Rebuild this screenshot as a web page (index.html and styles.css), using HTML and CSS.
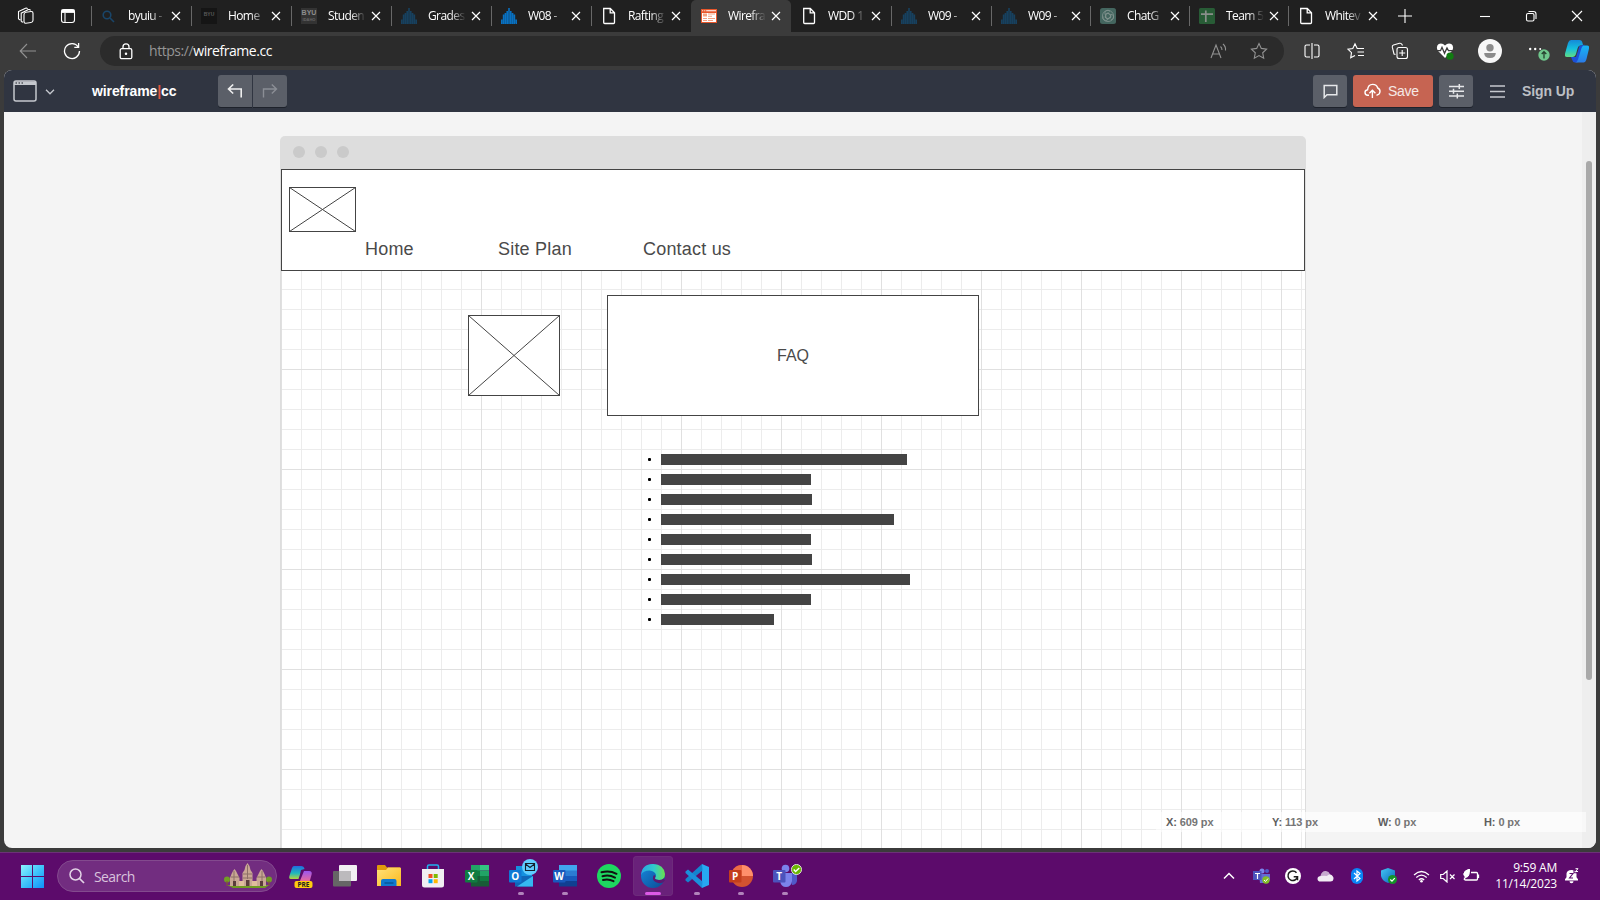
FILE: index.html
```html
<!DOCTYPE html>
<html lang="en">
<head>
<meta charset="utf-8">
<title>Wireframe.cc</title>
<link rel="stylesheet" href="styles.css">
</head>
<body>
<svg class="defs" aria-hidden="true">
  <defs>
    <linearGradient id="g-start" x1="0" y1="0" x2="1" y2="1"><stop offset="0" stop-color="#8cf3ff"/><stop offset=".5" stop-color="#3fc4fb"/><stop offset="1" stop-color="#0f90fb"/></linearGradient>
    <linearGradient id="g-cop1" x1="0" y1="0" x2="0" y2="1"><stop offset="0" stop-color="#1589d8"/><stop offset=".5" stop-color="#14bede"/><stop offset="1" stop-color="#5fdc84"/></linearGradient>
    <linearGradient id="g-cop2" x1="0" y1="0" x2="0" y2="1"><stop offset="0" stop-color="#16b5f4"/><stop offset="1" stop-color="#2b7be6"/></linearGradient>
    <linearGradient id="g-pre1" x1="0" y1="0" x2="0" y2="1"><stop offset="0" stop-color="#216ddf"/><stop offset=".55" stop-color="#1fb7bd"/><stop offset="1" stop-color="#b5d43d"/></linearGradient>
    <linearGradient id="g-pre2" x1="0" y1="0" x2="0" y2="1"><stop offset="0" stop-color="#9a56ef"/><stop offset="1" stop-color="#f16c92"/></linearGradient>
    <linearGradient id="g-fold" x1="0" y1="0" x2="1" y2="1"><stop offset="0" stop-color="#ffe27a"/><stop offset="1" stop-color="#fbb91d"/></linearGradient>
    <linearGradient id="g-edge" x1="0" y1="0" x2="1" y2="0"><stop offset="0" stop-color="#2aa5e4"/><stop offset=".55" stop-color="#31cbca"/><stop offset="1" stop-color="#6be04c"/></linearGradient>
    <linearGradient id="g-edge2" x1="0" y1="0" x2="1" y2="1"><stop offset="0" stop-color="#1789dd"/><stop offset="1" stop-color="#0b4b94"/></linearGradient>
    <linearGradient id="g-shield" x1="0" y1="0" x2="1" y2="1"><stop offset="0" stop-color="#43c7f3"/><stop offset="1" stop-color="#0c65bc"/></linearGradient>
    <symbol id="i-close" viewBox="0 0 10 10"><path d="M1 1l8 8M9 1l-8 8"/></symbol>
    <symbol id="i-page" viewBox="0 0 16 18"><path d="M2.700 1.500h6.600l4.200 4.200v9.800a1 1 0 0 1-1 1H3.700a1 1 0 0 1-1-1zM9.200 1.500v4.300h4.300"/></symbol>
    <symbol id="i-temple" viewBox="0 0 16 16"><path d="M.8 16v-4.500M2.600 16V6.500M4.400 16V5M6.200 16V3M8 16V0M9.800 16V3M11.600 16V5M13.400 16V6.500M15.200 16v-4.500"/></symbol>
  </defs>
</svg>

<div class="browser">
  <div class="tabstrip">
    <div class="strip-btns">
      <svg class="ln" width="18" height="18" viewBox="0 0 18 18"><rect x="7" y="4.500" width="9" height="11" rx="2" transform="skewY(-8) translate(0 2)"/><path d="M4.200 14.500V6.200L11.500 2.600q1.500-.5 2 .9M1.500 12V4.500L8.500 1.200q1.300-.5 2 .8M4.200 14.500l2 .8M1.500 12l1.800 1"/></svg>
      <svg class="ln" width="16" height="16" viewBox="0 0 16 16"><rect x="1.500" y="1.500" width="13" height="13" rx="2.500"/><path d="M1.500 3.200h13" stroke-width="3.400"/><path d="M5 5v9"/></svg>
    </div>
    <div class="tab"><svg class="fav search" viewBox="0 0 16 16"><circle cx="6" cy="7" r="3.800"/><path d="M9 10l4 4"/></svg><span class="t">byuiu -</span><svg class="x"><use href="#i-close"/></svg></div>
    <div class="tab"><span class="fav byu">BYU</span><span class="t">Home</span><svg class="x"><use href="#i-close"/></svg></div>
    <div class="tab"><span class="fav byu big">BYU<small>IDAHO</small></span><span class="t">Studen</span><svg class="x"><use href="#i-close"/></svg></div>
    <div class="tab"><svg class="fav temple"><use href="#i-temple"/></svg><span class="t">Grades</span><svg class="x"><use href="#i-close"/></svg></div>
    <div class="tab"><svg class="fav temple lit"><use href="#i-temple"/></svg><span class="t">W08 -</span><svg class="x"><use href="#i-close"/></svg></div>
    <div class="tab"><svg class="fav page"><use href="#i-page"/></svg><span class="t">Rafting</span><svg class="x"><use href="#i-close"/></svg></div>
    <div class="tab active"><svg class="fav" viewBox="0 0 16 16"><path fill="#e8572c" d="M0 1h16v14H0z"/><path fill="#fff" d="M1 5h14v9H1zM1.200 2.200h1v1h-1zM3.300 2.200h1v1h-1zM5.200 2.200H15v1H5.200z"/><path fill="#f4a182" d="M2 5.600h4v3H2zM7 5.600h7v1H7zM7 7.700h4v1H7zM2 10h4v1H2zM7 10h7v1H7zM2 12.100h4v1H2zM7 12.100h5v1H7z"/></svg><span class="t">Wirefra</span><svg class="x"><use href="#i-close"/></svg></div>
    <div class="tab"><svg class="fav page"><use href="#i-page"/></svg><span class="t">WDD 1</span><svg class="x"><use href="#i-close"/></svg></div>
    <div class="tab"><svg class="fav temple"><use href="#i-temple"/></svg><span class="t">W09 -</span><svg class="x"><use href="#i-close"/></svg></div>
    <div class="tab slim"><svg class="fav temple"><use href="#i-temple"/></svg><span class="t">W09 -</span><svg class="x"><use href="#i-close"/></svg></div>
    <div class="tab slim"><svg class="fav" viewBox="0 0 16 16"><rect width="16" height="16" rx="2.500" fill="#44665f"/><g fill="none" stroke="#82938f" stroke-width=".8"><path id="petal" d="M8 5.300l2.400 1.400v3.600M10.400 6.700L7.600 5 5 6.500Q4 3 7 2.300q2-.3 3 1.200"/><path d="M8 5.300l2.400 1.400v3.600M10.400 6.700L7.600 5 5 6.500Q4 3 7 2.300q2-.3 3 1.200" transform="rotate(120 8 8)"/><path d="M8 5.300l2.400 1.400v3.600M10.400 6.700L7.600 5 5 6.500Q4 3 7 2.300q2-.3 3 1.200" transform="rotate(240 8 8)"/><circle cx="8" cy="8" r="5.600"/></g></svg><span class="t">ChatG</span><svg class="x"><use href="#i-close"/></svg></div>
    <div class="tab slim"><svg class="fav" viewBox="0 0 16 16"><rect width="16" height="16" rx="1.500" fill="#285c36"/><path d="M6.800 2.500v11.500M2 6.200h12" stroke="#8a8f8b" stroke-width="1.700"/></svg><span class="t">Team 5</span><svg class="x"><use href="#i-close"/></svg></div>
    <div class="tab slim"><svg class="fav page"><use href="#i-page"/></svg><span class="t">Whitev</span><svg class="x"><use href="#i-close"/></svg></div>
    <div class="newtab"><svg class="ln" width="14" height="14" viewBox="0 0 14 14"><path d="M7 0v14M0 7h14"/></svg></div>
    <div class="winbtns">
      <svg class="ln" viewBox="0 0 12 12"><path d="M1 6.500h10"/></svg>
      <svg class="ln" viewBox="0 0 12 12"><rect x="1.500" y="3.500" width="7.500" height="7.500" rx="1.500"/><path d="M3.500 1.500h5q2.500 0 2.500 2.500v5"/></svg>
      <svg class="ln" viewBox="0 0 12 12"><path d="M1 1l10 10M11 1L1 11"/></svg>
    </div>
  </div>

  <div class="toolbar">
    <div class="navbtns">
      <svg class="ln dim" width="18" height="16" viewBox="0 0 18 16"><path d="M17 8H1.500M8 1L1.200 8 8 15"/></svg>
      <svg class="ln" width="18" height="18" viewBox="0 0 18 18"><path d="M15.300 5A7.500 7.500 0 1 0 16.500 9M15.600 1v4.300h-4.300" stroke-width="1.300"/></svg>
    </div>
    <div class="address">
      <svg class="ln lock" width="14" height="17" viewBox="0 0 14 17"><rect x="1.200" y="5.700" width="11.600" height="10" rx="1.500" stroke-width="1.300"/><path d="M4 5.500V3.800a3 3 0 0 1 6 0v1.700" stroke-width="1.300"/><circle cx="7" cy="10.700" r=".7" fill="#fff"/></svg>
      <span class="url"><span class="scheme">https://</span>wireframe.cc</span>
      <svg class="ln dim aloud" width="18" height="16" viewBox="0 0 18 16"><path d="M1 15L6 2l5 13M2.700 11h6.600M10.500 3.500q1.500 1.200 1.500 3.500M13 1q3 2.500 2.500 6.500"/></svg>
      <svg class="ln dim" width="18" height="18" viewBox="0 0 18 18"><path d="M9 1.500l2.300 4.900 5.300.7-3.900 3.700 1 5.400L9 13.600l-4.700 2.600 1-5.400L1.400 7.100l5.300-.7z"/></svg>
    </div>
    <div class="ext">
      <svg class="ln" width="16" height="16" viewBox="0 0 16 16"><path d="M6 2H2.500Q1 2 1 3.500v9Q1 14 2.500 14H6M10 2h3.500q1.500 0 1.500 1.500v9q0 1.500-1.500 1.500H10M8 0v16"/></svg>
      <svg class="ln" width="18" height="18" viewBox="0 0 18 18"><path d="M12 6.500h-1.800L8 1.800 5.800 6.500.9 7.200l3.600 3.400-.8 5.200L8 13.400M11.500 6.500H17M10.500 10H17M11 13.500h6"/></svg>
      <svg class="ln" width="18" height="18" viewBox="0 0 18 18"><rect x="6" y="5.500" width="10.500" height="11" rx="2"/><path d="M11.200 8v6M8.200 11h6M4.500 12.500L3 12 1.300 5.200Q1 3.500 2.500 3l6-1.700q1.700-.4 2.500 1.200l.5 1"/></svg>
      <svg width="18" height="18" viewBox="0 0 18 18"><path d="M9 16L1.800 8.700Q-.4 4.500 2.700 2 6.200.5 9 3.500 11.800.5 15.300 2q3.100 2.500.9 6.700z" fill="#fff"/><path d="M0 8.700h4.500L6 5.300l2.500 6L11 6l1.500 2.700H18" fill="none" stroke="#3b3b3b" stroke-width="1.300"/><circle cx="14" cy="14.200" r="3.600" fill="#107c10"/></svg>
      <svg class="profile" width="24" height="24" viewBox="0 0 24 24"><circle cx="12" cy="12" r="12" fill="#f7f7f7"/><circle cx="12" cy="8.700" r="3.700" fill="#8b8b8b"/><path d="M6.200 14h11.600q0 5-5.800 5t-5.800-5z" fill="#8b8b8b"/></svg>
      <svg class="more" width="22" height="18" viewBox="0 0 22 18"><g fill="#fff"><circle cx="2.200" cy="4" r="1.200"/><circle cx="7.200" cy="4" r="1.200"/><circle cx="12.200" cy="4" r="1"/></g><circle cx="16" cy="10" r="5.700" fill="#6fc68c"/><path d="M16 13.500V7M13.700 9L16 6.700 18.300 9" fill="none" stroke="#25402e" stroke-width="1.300"/></svg>
      <svg class="copilot" width="24" height="23" viewBox="0 0 24 23"><path d="M6 17h5l3.500-11 5-1.500L15 20q-1 2.500-3 2.500h-2q-2.200 0-3-3z" fill="#1c4fd8"/><path d="M6 0h8.500q2.500 0 3 3l.5 2-3 .5q-2 .5-2.500 3L11 14q-1 3-3.500 3H2q-3 0-1.800-4L3 3Q4 0 6 0z" fill="url(#g-cop1)"/><path d="M18.500 22.500H10q2.200-.5 3-3l3.500-11.500Q17.200 5.500 19 5.500h3q3 0 1.800 4L21.500 19q-1 3.500-3 3.500z" fill="url(#g-cop2)"/></svg>
    </div>
  </div>

  <div class="viewport">
    <header class="appbar">
      <svg class="device" width="24" height="22" viewBox="0 0 24 22"><rect x="1" y="1" width="22" height="20" rx="2" fill="none" stroke="#c5c8ce" stroke-width="1.500"/><path d="M1 1.500h22V5H1z" fill="#c5c8ce"/><path d="M2.500 3h1.500M5.500 3H7M8.500 3H10" stroke="#50545c" stroke-width="1.400"/></svg>
      <svg class="caret" width="10" height="6" viewBox="0 0 10 6"><path d="M1 .8l4 4 4-4" fill="none" stroke="#c5c8ce" stroke-width="1.300"/></svg>
      <span class="logo">wireframe<i>|</i>cc</span>
      <div class="undo">
        <span><svg width="16" height="14" viewBox="0 0 16 14"><path d="M14.200 13.500V5H1.500M6.200.5L1.500 5l4.700 4.500" fill="none" stroke="#eee" stroke-width="1.600"/></svg></span>
        <span><svg width="16" height="14" viewBox="0 0 16 14"><path d="M1.500 13.500V5h12.700M9.800.5L14.500 5 9.800 9.500" fill="none" stroke="#8b8e95" stroke-width="1.400"/></svg></span>
      </div>
      <div class="actions">
        <span class="btn"><svg width="15" height="15" viewBox="0 0 15 15"><path d="M1.200 13.500V1.500h12.600v9.300H4z" fill="none" stroke="#e6e7e9" stroke-width="1.500"/></svg></span>
        <span class="btn save"><svg width="17" height="16" viewBox="0 0 17 16"><path d="M5 12.200H3.700Q1 12 1 9.400q0-2.300 2.600-2.700Q4 1.500 8.700 1.400q4 0 5 3.600 2.500 1 2.300 3.800-.3 3-3.500 3.400M8.400 15V7.200M5.400 10.200l3-3 3 3" fill="none" stroke="#fff" stroke-width="1.400"/></svg>Save</span>
        <span class="btn"><svg width="15" height="16" viewBox="0 0 15 16"><path d="M0 3.500h15M0 8.200h15M0 12.900h15M10.300 1v5M4.500 5.700v5M8.300 10.400v5" fill="none" stroke="#e6e7e9" stroke-width="1.500"/></svg></span>
      </div>
      <svg class="menu" width="15" height="13" viewBox="0 0 15 13"><path d="M0 1h15M0 6.500h15M0 12h15" stroke="#c5c8ce" stroke-width="1.400"/></svg>
      <span class="signup">Sign Up</span>
    </header>

    <main class="stage">
      <div class="frame">
        <div class="frame-bar"><b></b><b></b><b></b></div>
        <div class="canvas">
          <div class="item head"></div>
          <svg class="item pic small" width="67" height="45"><rect x=".5" y=".5" width="66" height="44"/><path d="M.5.5l66 44M66.500.5l-66 44"/></svg>
          <span class="item label home">Home</span>
          <span class="item label plan">Site Plan</span>
          <span class="item label contact">Contact us</span>
          <svg class="item pic large" width="92" height="81"><rect x=".5" y=".5" width="91" height="80"/><path d="M.5.5l91 80M91.500.5l-91 80"/></svg>
          <div class="item faq">FAQ</div>
          <ul class="item lines">
            <li><i style="width:246px"></i></li>
            <li><i style="width:150px"></i></li>
            <li><i style="width:151px"></i></li>
            <li><i style="width:233px"></i></li>
            <li><i style="width:150px"></i></li>
            <li><i style="width:151px"></i></li>
            <li><i style="width:249px"></i></li>
            <li><i style="width:150px"></i></li>
            <li><i style="width:113px"></i></li>
          </ul>
        </div>
      </div>
      <div class="scroll"><div class="thumb"></div></div>
      <div class="status"><span><b>X:</b> 609 px</span><span><b>Y:</b> 113 px</span><span><b>W:</b> 0 px</span><span><b>H:</b> 0 px</span></div>
    </main>
  </div>
</div>

<footer class="taskbar">
  <svg class="start" width="23" height="23" viewBox="0 0 23 23"><path d="M0 0h11v11H0zM12 0h11v11H12zM0 12h11v11H0zM12 12h11v11H12z" fill="url(#g-start)"/></svg>
  <div class="searchbox">
    <svg width="16" height="16" viewBox="0 0 16 16"><circle cx="6.500" cy="6.500" r="5.500" fill="none" stroke="#e2d3e6" stroke-width="1.500"/><path d="M10.500 10.500l4.500 4.500" stroke="#e2d3e6" stroke-width="1.700"/></svg>
    <span>Search</span>
    <svg class="castle" width="48" height="26" viewBox="0 0 48 26"><path d="M3 22h42l-4 3H9z" fill="#6f9c22"/><circle cx="3" cy="16.500" r="3" fill="#719d25"/><circle cx="45" cy="16.500" r="3" fill="#719d25"/><path d="M2.500 18h1v5h-1zM44.500 18h1v5h-1z" fill="#8a5a2b"/><path d="M6 23v-8l1.500-4L9 8l1.500-2L12 8l1.500 3 2 4v3h3v-8l2-3 1-4L23.500 0 25.500 3l1 4 2 3v8h4v-3l2-4L36 8l1.500-2L39 8l1.500 3 1.500 4v8z" fill="#c9a794"/><path d="M10 8v11M38 8v11M23.500 2v14M19 11h9M7 14h8M33 14h8M19 15h9" stroke="#8d7067" stroke-width="1"/><path d="M9 18h3v5H9zM22 17h3.500v6H22zM36 18h3v5h-3z" fill="#5b3d3b"/><path d="M15 18h5v5h-5zM28 18h5v5h-5z" fill="#dfbd9c"/></svg>
  </div>
  <div class="apps">
    <span><svg viewBox="0 0 24 24"><path d="M5 2h7q3 0 3.500 3L12 6q-1 5-2.500 9H2q-2.500 0-1.600-3L3 4q.7-2 2-2z" fill="url(#g-pre1)"/><path d="M15 7h5q3.500 0 2.600 3.500L20.500 18H10.500z" fill="url(#g-pre2)"/><rect x="5.500" y="17" width="18" height="7" rx="2" fill="#ffcb0f"/><text x="14.500" y="23" class="pre">PRE</text></svg></span>
    <span><svg viewBox="0 0 24 24"><rect x="6" y="1" width="18" height="16" rx="1" fill="#f2f0f3"/><rect x="0" y="7" width="18" height="15.500" rx="1" fill="#666"/><path d="M6 7h12v10H6z" fill="#bcbabd"/></svg></span>
    <span><svg viewBox="0 0 24 24"><path d="M0 2q0-1 1-1h7l2 2.500h13v5H0z" fill="#e19b0c"/><path d="M0 6h9l2-2.500h12q1 0 1 1V22H0z" fill="url(#g-fold)"/><path d="M4 22v-5q0-2 2-2h11.500q2 0 2 2v5z" fill="#0f79cf"/><path d="M7.500 19h9" stroke="#07508f" stroke-width="1.300"/></svg></span>
    <span><svg viewBox="0 0 24 24"><path d="M6.500 7V2.500q0-1.500 1.500-1.500h8q1.500 0 1.500 1.500V7" fill="none" stroke="#20b1f0" stroke-width="1.500"/><path d="M1 5h22v16q0 2.500-2.500 2.500h-17Q1 23.500 1 21z" fill="#f1eff2"/><path d="M7.500 10h4v4h-4z" fill="#f25022"/><path d="M12.700 10h4v4h-4z" fill="#7fba00"/><path d="M7.500 15.200h4v4h-4z" fill="#00a4ef"/><path d="M12.700 15.200h4v4h-4z" fill="#ffb900"/></svg></span>
    <span><svg viewBox="0 0 24 24"><path d="M6 1h9v7H6z" fill="#21a366"/><path d="M15 1h9v5.500h-9z" fill="#33c481"/><path d="M6 6.500h9V12H6z" fill="#107c41"/><path d="M15 6.500h9V12h-9z" fill="#21a366"/><path d="M6 12h18v10.500H6z" fill="#185c37"/><path d="M15 12h9v5h-9z" fill="#107c41"/><rect y="6" width="12.500" height="12.500" rx="1" fill="#107c41"/><text x="6.200" y="16" class="ms">X</text></svg></span>
    <span class="open"><svg viewBox="0 0 24 24"><path d="M7 2h16v12H7z" fill="#1490df"/><path d="M15 2h8v6h-8z" fill="#28a8ea"/><path d="M6 12h18v10.500H6z" fill="#1066b8"/><path d="M24 12L8 22.500h16z" fill="#35b8f1"/><rect y="6" width="12.500" height="12.500" rx="1" fill="#0f78d4"/><text x="6.200" y="16" class="ms">O</text></svg><svg class="badge mail" viewBox="0 0 16 16"><circle cx="8" cy="8" r="8" fill="#60cdff"/><path d="M3.500 4.500h9v7h-9zM3.500 5l4.500 3.500L12.500 5" fill="none" stroke="#13202c" stroke-width="1.100"/></svg></span>
    <span class="open"><svg viewBox="0 0 24 24"><path d="M6 1h18v6H6z" fill="#41a5ee"/><path d="M6 6.500h18v5.500H6z" fill="#2b7cd3"/><path d="M6 12h18v5.500H6z" fill="#185abd"/><path d="M6 17h18v5.500H6z" fill="#103f91"/><rect y="6" width="12.500" height="12.500" rx="1" fill="#185abd"/><text x="6.200" y="16" class="ms">W</text></svg></span>
    <span><svg viewBox="0 0 24 24"><circle cx="12" cy="12" r="12" fill="#1ed760"/><path d="M4.500 8.300q8-2.300 15 1.500M5.500 12.300q6.500-1.900 12.500 1.300M6 16q5.500-1.500 10.500 1.200" fill="none" stroke="#111" stroke-width="2" stroke-linecap="round"/></svg></span>
    <span class="current"><svg viewBox="0 0 24 24"><circle cx="12" cy="12" r="12" fill="url(#g-edge2)"/><path d="M0 11Q1 0 12 0q11 .5 12 10 0 6-6 6-4 0-4.200-1.700Q15.500 12.500 15 11q-1-4-6.500-4.500Q2 6.500 0 11z" fill="url(#g-edge)"/><path d="M14 14.300q.5 1.700 4 1.700 3 0 4.800-1.500l1.200 2-2.200 2q-3.800 1.500-7.300-.5-3-2-2.500-4.500 0-1.300 1-2.500 1 .3 1.300 1.500z" fill="#5c1970"/></svg></span>
    <span class="open"><svg viewBox="0 0 24 24"><path d="M17 0l7 3v18l-7 3z" fill="#27a9f2"/><path d="M17.500 6.500L3 18.500.500 16.500V15L17 0z" fill="#1483ce"/><path d="M17.500 17.500L3 5.500.5 7.500V9L17 24z" fill="#1b8fdb"/></svg></span>
    <span class="open"><svg viewBox="0 0 24 24"><circle cx="13" cy="12" r="11" fill="#d35230"/><path d="M13 1a11 11 0 0 1 11 11H13z" fill="#ff8f6b"/><path d="M13 1v11H2A11 11 0 0 1 13 1z" fill="#ed6c47"/><rect y="6" width="12.500" height="12.500" rx="1" fill="#c43e1c"/><text x="6.200" y="16" class="ms">P</text></svg></span>
    <span class="open"><svg viewBox="0 0 24 24"><circle cx="12.500" cy="4.500" r="3.800" fill="#7b83eb"/><path d="M16 9h8v8q-1 4-5 4z" fill="#5059c9"/><path d="M7 9h12v8q-1 6-6 6t-6-6z" fill="#7b83eb"/><rect y="6" width="12.500" height="12.500" rx="1" fill="#4b53bc"/><text x="6.200" y="16" class="ms">T</text></svg><svg class="badge ok" viewBox="0 0 12 12"><circle cx="6" cy="6" r="5.500" fill="#6bb700" stroke="#e8e8e8"/><path d="M3 6l2 2.300 4-4" fill="none" stroke="#fff" stroke-width="1.500"/></svg></span>
  </div>
  <div class="tray">
    <span><svg width="12" height="8" viewBox="0 0 12 8"><path d="M1 6.500l5-5 5 5" fill="none" stroke="#fff" stroke-width="1.500"/></svg></span>
    <span><svg width="17" height="16" viewBox="0 0 17 16"><circle cx="9" cy="3" r="2.500" fill="#7b83eb"/><circle cx="14" cy="3" r="2" fill="#5059c9"/><path d="M6 6h11v6l-4 3H7z" fill="#646cd6"/><path d="M0 3h8.500v9H0z" fill="#4b53bc"/><path d="M2 5.500h5M4.500 5.500V11" stroke="#fff" stroke-width="1.200"/><circle cx="13" cy="12" r="3.700" fill="#83be28"/><path d="M11 12l1.500 1.500 2.500-3" fill="none" stroke="#fff"/></svg></span>
    <span><svg width="16" height="16" viewBox="0 0 16 16"><circle cx="8" cy="8" r="8" fill="#fff"/><path d="M11.500 4.700A4.800 4.800 0 1 0 12.500 8.700H8.700M12.500 8.500v3.700" fill="none" stroke="#1c1c1c" stroke-width="1.500"/></svg></span>
    <span><svg width="17" height="12" viewBox="0 0 17 12"><path d="M3.500 5.500Q5 .5 9 1q3 .3 4 3.200l1 4H4z" fill="#c7aacf"/><path d="M3.500 11.500Q.5 11.500.5 8.700.7 6 4 6q3-.5 6 0 1-2 3.500-1.500Q16.800 6 16.500 9q-.3 2.500-3 2.500z" fill="#f2edf4"/></svg></span>
    <span><svg width="12" height="16" viewBox="0 0 12 16"><rect width="12" height="16" rx="6" fill="#0a84f5"/><path d="M3 5l6 5.500L6 13V3l3 2.500L3 11" fill="none" stroke="#fff" stroke-width="1.200"/></svg></span>
    <span><svg width="16" height="16" viewBox="0 0 16 16"><path d="M7 0l7 2.500V8q-1 5-7 7Q1 13 0 8V2.500z" fill="url(#g-shield)"/><circle cx="11.500" cy="11.500" r="4.500" fill="#159329"/><path d="M9.300 11.500l1.700 1.700 2.800-3" fill="none" stroke="#fff" stroke-width="1.200"/></svg></span>
    <span><svg width="17" height="13" viewBox="0 0 17 13"><path d="M1 5q7.500-7 15 0M3.300 7.500q5.200-4.700 10.400 0M5.800 10q2.700-2.500 5.400 0" fill="none" stroke="#fff" stroke-width="1.200"/><circle cx="8.500" cy="11.200" r="1.300" fill="#fff"/></svg></span>
    <span class="tight"><svg width="16" height="13" viewBox="0 0 16 13"><path d="M.7 4.500h2.500L7 1v11L3.200 8.500H.7zM10 4.500l4.500 4.500M14.500 4.500L10 9" fill="none" stroke="#fff" stroke-width="1.200"/></svg></span>
    <span class="tight"><svg width="17" height="14" viewBox="0 0 17 14"><path d="M8 3.500h5.500q1 0 1 1V10q0 1-1 1H2.500q-1 0-1-1V8.500M15.500 5.500v3.500" fill="none" stroke="#fff" stroke-width="1.300"/><path d="M6.500 0Q1 1.500.7 5q.3 3 3 3.200 3-1 2.800-8.200zM1 10.500L5 5" fill="#fff" stroke="#fff"/></svg></span>
    <div class="clock">9:59 AM<br>11/14/2023</div>
    <svg class="bell" width="14" height="16" viewBox="0 0 14 16"><path d="M0 12.500h13v-1.300l-1.500-2V5.500Q11 2 6.500 2 2 2 1.500 5.500v3.700L0 11.200zM4.500 13.300h4q0 1.900-2 1.900t-2-1.900z" fill="#fff"/><path d="M4.500 5.500h3.500L4.500 10H8M9 .7h4.500v4H9z" fill="none" stroke="#5d0d6c" stroke-width="1.100"/><path d="M10.500.7H13L10.500 3.500H13" fill="none" stroke="#fff" stroke-width="1"/></svg>
  </div>
</footer>
</body>
</html>
```
FILE: styles.css
```css
* { box-sizing: border-box; }
body {
  margin: 0;
  width: 1600px;
  height: 900px;
  overflow: hidden;
  display: flex;
  flex-direction: column;
  font-family: "Open Sans", "Noto Sans", sans-serif;
  background: #5c0b6b;
}
svg { display: block; flex: none; }
.defs { position: absolute; width: 0; height: 0; }
.ln { fill: none; stroke: #fff; stroke-width: 1.1; }
.ln.dim { stroke: #929292; }

.browser { height: 852px; background: #3b3b3b; display: flex; flex-direction: column; }

/* Tab strip */
.tabstrip { height: 32px; background: #202020; display: flex; }
.strip-btns { width: 91px; display: flex; align-items: center; gap: 25px; padding-left: 17px; }
.tab {
  width: 100px;
  height: 32px;
  flex: none;
  display: flex;
  align-items: center;
  padding-left: 10px;
  background: linear-gradient(#686868, #686868) 0 6px / 1px 20px no-repeat;
}
.tab.slim { width: 99px; }
.tab.active { background: #3b3b3b; border-radius: 5px 5px 0 0; }
.tab.active + .tab { background: none; }
.fav { width: 16px; height: 16px; margin-right: 11px; flex: none; }
.fav.page { height: 18px; fill: none; stroke: #fff; stroke-width: 1.3; }
.fav.temple { stroke: #17415f; stroke-width: 1.6; }
.fav.temple.lit { stroke: #0871c2; }
.fav.search { fill: none; stroke: #194569; stroke-width: 1.6; }
.byu { background: #151515; color: #5a5a5a; font: bold 5px/12px "Liberation Sans", sans-serif; text-align: center; }
.byu.big { background: #333; color: #8d8d8d; font: bold 7px/9px "Liberation Sans", sans-serif; }
.byu small { display: block; font-size: 4px; line-height: 6px; color: #666; }
.t {
  width: 39px;
  overflow: hidden;
  white-space: nowrap;
  font-size: 12px;
  line-height: 18px;
  letter-spacing: -0.6px;
  color: #fff;
  -webkit-mask-image: linear-gradient(90deg, #000 22px, transparent 38px);
  mask-image: linear-gradient(90deg, #000 22px, transparent 38px);
}
.x { width: 10px; height: 10px; margin-left: 4px; stroke: #fff; stroke-width: 1.2; }
.newtab { width: 36px; display: flex; align-items: center; justify-content: center; }
.winbtns { margin-left: auto; display: flex; align-items: center; gap: 34px; padding-right: 17px; }
.winbtns svg { width: 12px; height: 12px; }

/* Browser toolbar */
.toolbar { height: 38px; display: flex; align-items: center; }
.navbtns { width: 100px; display: flex; gap: 26px; padding-left: 19px; align-items: center; }
.address {
  width: 1184px;
  height: 30px;
  border-radius: 15px;
  background: #2b2b2b;
  display: flex;
  align-items: center;
  padding: 0 16px 0 19px;
}
.url { margin-left: 16px; font-size: 14px; line-height: 20px; letter-spacing: -0.44px; color: #fff; }
.scheme { color: #959595; }
.aloud { margin-left: auto; margin-right: 22px; }
.ext { display: flex; align-items: center; padding-left: 20px; gap: 26.500px; flex: 1; }
.ext .profile { margin-left: -2px; }
.ext .more { margin-top: 6px; margin-left: -1px; }
.ext .copilot { margin-left: -11px; }

/* Page viewport */
.viewport { width: 1592px; height: 778px; margin-left: 4px; border-radius: 8px; overflow: hidden; background: #f4f4f4; }
.appbar {
  height: 42px;
  background: #303541;
  display: flex;
  align-items: center;
  font-family: "Liberation Sans", Arial, sans-serif;
}
.device { margin-left: 9px; margin-top: -1px; }
.caret { margin: 1px 0 0 8px; }
.logo { margin-left: 37px; width: 89px; font-size: 14px; font-weight: bold; letter-spacing: -0.1px; color: #fff; white-space: nowrap; }
.logo i { font-style: normal; color: #e2553f; }
.undo { margin-left: 37px; display: flex; gap: 1px; }
.undo span, .btn {
  width: 34px;
  height: 32px;
  background: #5b5f68;
  box-shadow: 0 1px 0 #1e222b;
  display: flex;
  align-items: center;
  justify-content: center;
  border-radius: 3px;
}
.undo span:first-child { border-radius: 3px 0 0 3px; }
.undo span:last-child { border-radius: 0 3px 3px 0; }
.actions { margin-left: auto; display: flex; gap: 6px; }
.btn.save { width: 80px; justify-content: flex-start; padding-left: 11px; background: #c66452; color: #f5e9e6; font-size: 14px; letter-spacing: -0.3px; gap: 7px; }
.menu { margin-left: 17px; }
.signup { width: 52px; margin: 0 22px 0 17px; font-size: 14px; font-weight: bold; letter-spacing: -0.1px; color: #bcbfc4; white-space: nowrap; }

/* Drawing area */
.stage { position: relative; height: 736px; display: flex; font-family: "Liberation Sans", Arial, sans-serif; }
.frame { width: 1026px; margin: 24px 0 0 276px; }
.frame-bar {
  height: 33px;
  border-radius: 5px 5px 0 0;
  background: #ddd;
  display: flex;
  align-items: center;
  gap: 10px;
  padding: 0 0 1px 13px;
}
.frame-bar b { width: 12px; height: 12px; border-radius: 50%; background: #cacaca; }
.canvas {
  position: relative;
  height: 679px;
  border: solid #ddd;
  border-width: 0 1px;
  background-color: #fff;
  background-image:
    linear-gradient(90deg, #e0e0e0 1px, transparent 1px),
    linear-gradient(#e0e0e0 1px, transparent 1px),
    linear-gradient(90deg, #ececec 1px, transparent 1px),
    linear-gradient(#ececec 1px, transparent 1px);
  background-size: 100px 100px, 100px 100px, 20px 20px, 20px 20px;
}
.item { position: absolute; }
.head { left: 0; top: 0; width: 1024px; height: 102px; background: #fff; border: 1px solid #444; }
.pic { fill: #fff; stroke: #444; }
.pic.small { left: 8px; top: 18px; }
.pic.large { left: 187px; top: 146px; }
.label { font-size: 18px; line-height: 20px; letter-spacing: 0.2px; color: #4a4a4a; white-space: nowrap; }
.home { left: 84px; top: 70px; }
.plan { left: 217px; top: 70px; }
.contact { left: 362px; top: 70px; }
.faq {
  left: 326px;
  top: 126px;
  width: 372px;
  height: 121px;
  border: 1px solid #444;
  background: #fff;
  color: #4a4a4a;
  font-size: 16px;
  line-height: 119px;
  text-align: center;
}
.lines { left: 367px; top: 285px; margin: 0; padding: 0; list-style: none; display: flex; flex-direction: column; gap: 9px; }
.lines li { height: 11px; display: flex; align-items: center; gap: 10px; }
.lines li::before { content: ""; width: 3px; height: 3px; border-radius: 1px; background: #000; }
.lines i { height: 11px; background: #444; }
.scroll { margin-left: auto; width: 14px; background: #eee; padding: 49px 0 0 4px; }
.thumb { width: 6px; height: 519px; border-radius: 3px; background: #a9a9a9; }
.status {
  position: absolute;
  right: 10px;
  bottom: 16px;
  width: 430px;
  height: 20px;
  display: flex;
  padding-left: 10px;
  background: rgba(255, 255, 255, .6);
  font-size: 11px;
  font-weight: bold;
  letter-spacing: -0.1px;
  line-height: 20px;
  color: #757575;
}
.status span { width: 106px; flex: none; white-space: nowrap; }
.status b { color: #5e5e5e; }

/* Taskbar */
.taskbar { height: 48px; background: #5c0b6b; border-top: 1px solid #6c3277; display: flex; align-items: center; padding: 0 0 1px 21px; }
.searchbox {
  width: 220px;
  height: 32px;
  margin-left: 13px;
  border-radius: 16px;
  border: 1px solid #834a8e;
  background: #722d80;
  display: flex;
  align-items: center;
  padding: 0 4px 0 11px;
  color: #d9c3dd;
  font-size: 14px;
  letter-spacing: -0.6px;
}
.searchbox span { margin-left: 9px; }
.castle { margin-left: auto; }
.apps { display: flex; gap: 4px; margin-left: 4px; }
.apps span { position: relative; width: 40px; height: 40px; border-radius: 4px; display: flex; align-items: center; justify-content: center; }
.apps svg { width: 24px; height: 24px; }
.apps .badge { position: absolute; }
.apps .mail { width: 16px; height: 16px; left: 21px; top: 3px; }
.apps .ok { width: 11px; height: 11px; left: 26px; top: 8px; }
.open::after, .current::after { content: ""; position: absolute; bottom: 1px; width: 6px; height: 3px; border-radius: 2px; background: #b183bb; }
.current { background: #69217a; box-shadow: 0 0 0 1px #6d2b7b inset; }
.current::after { width: 16px; background: #dd5ae7; }
.pre { font: bold 6.500px "Open Sans", sans-serif; text-anchor: middle; fill: #222; }
.ms { font: bold 10px "Open Sans", sans-serif; text-anchor: middle; fill: #fff; }
.tray { margin-left: auto; display: flex; align-items: center; padding-right: 21px; }
.tray span { width: 32px; display: flex; justify-content: center; }
.tray .tight { width: 24px; margin-left: -1px; }
.tray .tight:first-of-type { margin-left: -3px; }
.clock { width: 74px; text-align: right; color: #fff; font-size: 12px; line-height: 16px; letter-spacing: -0.2px; white-space: nowrap; }
.bell { margin-left: 8px; }
```
